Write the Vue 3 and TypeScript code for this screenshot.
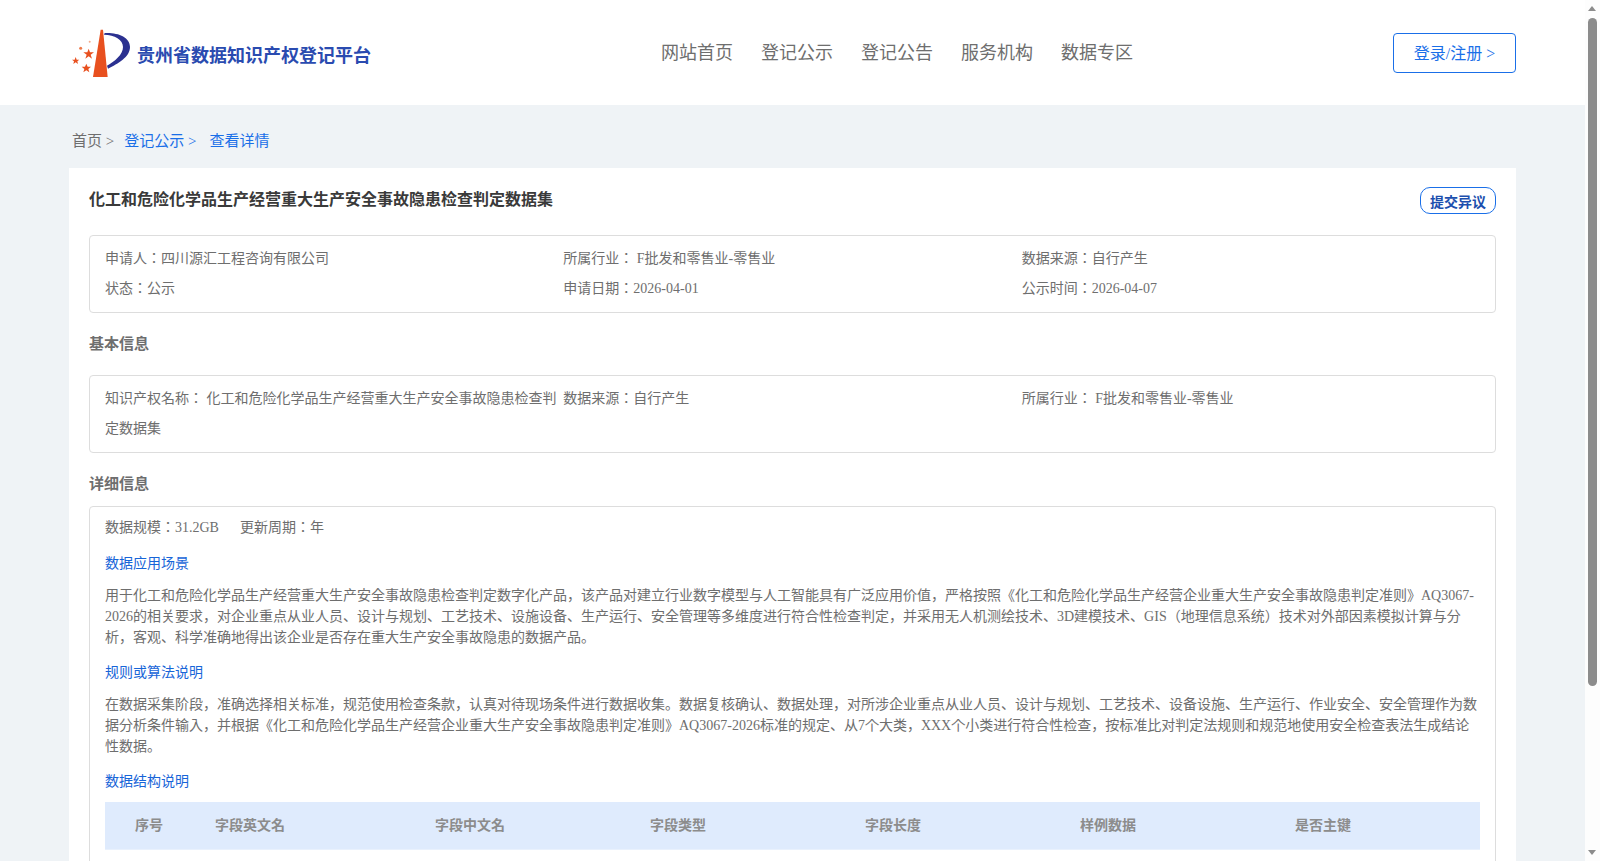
<script setup lang="ts">
const navItems = ['网站首页', '登记公示', '登记公告', '服务机构', '数据专区']
const columns = ['字段英文名', '字段中文名', '字段类型', '字段长度', '样例数据', '是否主键']
</script>

<template>
  <div class="page">
    <header class="header">
      <div class="brand">
        <svg class="logo" viewBox="0 0 210 180" width="70" height="60">
          <path d="M98 20 L105 20 L119 162 L75 162 Z" fill="#e8501f" />
          <path d="M110 30 C150 28 186 42 186 72 C186 102 150 122 120 137 L117 128 C140 115 165 95 165 72 C165 50 140 36 108 35 Z" fill="#2b3190" />
          <polygon points="62,77 66,88 78,88 68,95 72,107 62,100 52,107 56,95 46,88 58,88" fill="#e8501f" />
          <polygon points="55,122 59,131 69,131 61,138 64,148 55,142 46,148 49,138 41,131 51,131" fill="#e8501f" />
          <polygon points="23,102 26,110 34,110 28,115 30,123 23,118 16,123 18,115 12,110 20,110" fill="#e8501f" />
          <circle cx="38" cy="76" r="4.5" fill="#ee7a4c" />
          <circle cx="65" cy="56" r="3" fill="#f4a98a" />
        </svg>
        <span class="brand-name">贵州省数据知识产权登记平台</span>
      </div>
      <nav class="nav">
        <a v-for="item in navItems" :key="item" class="nav-item">{{ item }}</a>
      </nav>
      <button class="login">登录/注册 &gt;</button>
    </header>

    <main class="container">
      <div class="crumbs">
        <span>首页 &gt;</span>
        <span class="crumb-link">登记公示 &gt;</span>
        <span class="crumb-link">查看详情</span>
      </div>

      <section class="card">
        <div class="title-row">
          <h1 class="title">化工和危险化学品生产经营重大生产安全事故隐患检查判定数据集</h1>
          <button class="objection">提交异议</button>
        </div>

        <div class="info-box">
          <div>申请人：四川源汇工程咨询有限公司</div>
          <div>所属行业： F批发和零售业-零售业</div>
          <div>数据来源：自行产生</div>
          <div>状态：公示</div>
          <div>申请日期：2026-04-01</div>
          <div>公示时间：2026-04-07</div>
        </div>

        <h2 class="section-title">基本信息</h2>
        <div class="info-box">
          <div class="name-cell">知识产权名称： 化工和危险化学品生产经营重大生产安全事故隐患检查判定数据集</div>
          <div>数据来源：自行产生</div>
          <div>所属行业： F批发和零售业-零售业</div>
        </div>

        <h2 class="section-title detail-title">详细信息</h2>
        <div class="detail-box">
          <div class="meta">
            <span>数据规模：31.2GB</span>
            <span>更新周期：年</span>
          </div>

          <h3 class="sub-title">数据应用场景</h3>
          <p class="para">用于化工和危险化学品生产经营重大生产安全事故隐患检查判定数字化产品，该产品对建立行业数字模型与人工智能具有广泛应用价值，严格按照《化工和危险化学品生产经营企业重大生产安全事故隐患判定准则》AQ3067-2026的相关要求，对企业重点从业人员、设计与规划、工艺技术、设施设备、生产运行、安全管理等多维度进行符合性检查判定，并采用无人机测绘技术、3D建模技术、GIS（地理信息系统）技术对外部因素模拟计算与分析，客观、科学准确地得出该企业是否存在重大生产安全事故隐患的数据产品。</p>

          <h3 class="sub-title">规则或算法说明</h3>
          <p class="para">在数据采集阶段，准确选择相关标准，规范使用检查条款，认真对待现场条件进行数据收集。数据复核确认、数据处理，对所涉企业重点从业人员、设计与规划、工艺技术、设备设施、生产运行、作业安全、安全管理作为数据分析条件输入，并根据《化工和危险化学品生产经营企业重大生产安全事故隐患判定准则》AQ3067-2026标准的规定、从7个大类，XXX个小类进行符合性检查，按标准比对判定法规则和规范地使用安全检查表法生成结论性数据。</p>

          <h3 class="sub-title">数据结构说明</h3>
          <div class="table-head">
            <span>序号</span>
            <span v-for="col in columns" :key="col">{{ col }}</span>
          </div>
          <div class="table-body" />
        </div>
      </section>
    </main>

    <div class="scrollbar">
      <span class="arrow arrow-up" />
      <span class="thumb" />
      <span class="arrow arrow-down" />
    </div>
  </div>
</template>

<style>
html, body {
  margin: 0;
  background: #eff3f6;
}
</style>

<style scoped>
.page {
  width: 1585px;
  font-family: "Liberation Serif", "Noto Sans CJK JP", serif;
  color: #6e6e6e;
  min-height: 1066px;
  background: #eff3f6;
}

.header {
  height: 105px;
  padding: 0 69px 0 68px;
  background: #fff;
  display: flex;
  align-items: center;
  justify-content: space-between;
}

.brand {
  display: flex;
  align-items: center;
  width: 593px;
}

.logo {
  flex: none;
  margin-right: -1px;
}

.brand-name {
  font-size: 18px;
  font-weight: 700;
  color: #2a4bb0;
  padding-top: 2px;
}

.nav {
  display: flex;
  gap: 28px;
  flex: 1;
  padding-bottom: 4px;
}

.nav-item {
  font-size: 18px;
  color: #6e6e6e;
}

.login {
  width: 123px;
  height: 40px;
  font-family: inherit;
  font-size: 16px;
  color: #1a6fe8;
  background: #fff;
  border: 1px solid #1a6fe8;
  border-radius: 4px;
  padding: 0 0 2px;
}

.container {
  width: 1447px;
  margin: 0 auto;
}

.crumbs {
  height: 57px;
  padding: 6px 0 0 3px;
  display: flex;
  align-items: center;
  gap: 10px;
  font-size: 15px;
}

.crumb-link {
  color: #1a6fe8;
}

.crumb-link + .crumb-link {
  margin-left: 3px;
}

.card {
  background: #fff;
  padding: 19px 20px 40px;
}

.title-row {
  display: flex;
  justify-content: space-between;
  align-items: flex-start;
  height: 48px;
}

.title {
  margin: 0;
  padding-top: 1px;
  font-size: 16px;
  line-height: 24px;
  font-weight: 700;
  color: #3a3a3a;
}

.objection {
  width: 76px;
  height: 27px;
  padding: 0;
  font-family: inherit;
  font-size: 14px;
  font-weight: 700;
  color: #1c4fae;
  background: #fff;
  border: 1px solid #1a6fe8;
  border-radius: 10px;
}

.info-box {
  display: grid;
  grid-template-columns: repeat(3, 1fr);
  padding: 8px 15px;
  border: 1px solid #ddd;
  border-radius: 4px;
  font-size: 14px;
  line-height: 30px;
}

.name-cell {
  padding-right: 6px;
}

.section-title {
  margin: 0;
  height: 62px;
  line-height: 62px;
  font-size: 15px;
  font-weight: 700;
  color: #6e6e6e;
}

.detail-title {
  height: 53px;
  line-height: 62px;
}

.detail-box {
  padding: 9px 15px 24px;
  border: 1px solid #ddd;
  border-radius: 4px;
  font-size: 14px;
}

.meta {
  display: flex;
  gap: 21px;
  line-height: 23px;
}

.sub-title {
  margin: 12px 0 0;
  font-size: 14px;
  font-weight: 400;
  line-height: 26px;
  color: #1765d8;
}

.para {
  margin: 8px 0 0;
  line-height: 21px;
}

.table-head {
  display: grid;
  grid-template-columns: 80px 220px 215px 215px 215px 215px 1fr;
  height: 43px;
  margin-top: 7px;
  padding: 0 0 4px 30px;
  align-items: center;
  background: #dfebfd;
  border-bottom: 1px solid #e9f1fd;
  font-weight: 700;
  color: #8c8c8c;
}

.table-body {
  height: 150px;
}

.scrollbar {
  position: fixed;
  top: 0;
  right: 0;
  bottom: 0;
  width: 15px;
  background: #fdfdfd;
}

.thumb {
  position: absolute;
  top: 18px;
  left: 3px;
  width: 9px;
  height: 668px;
  border-radius: 5px;
  background: #8c8c8c;
}

.arrow {
  position: absolute;
  left: 3px;
  border-left: 4.5px solid transparent;
  border-right: 4.5px solid transparent;
}

.arrow-up {
  top: 6px;
  border-bottom: 5px solid #8c8c8c;
}

.arrow-down {
  bottom: 6px;
  border-top: 5px solid #8c8c8c;
}
</style>
